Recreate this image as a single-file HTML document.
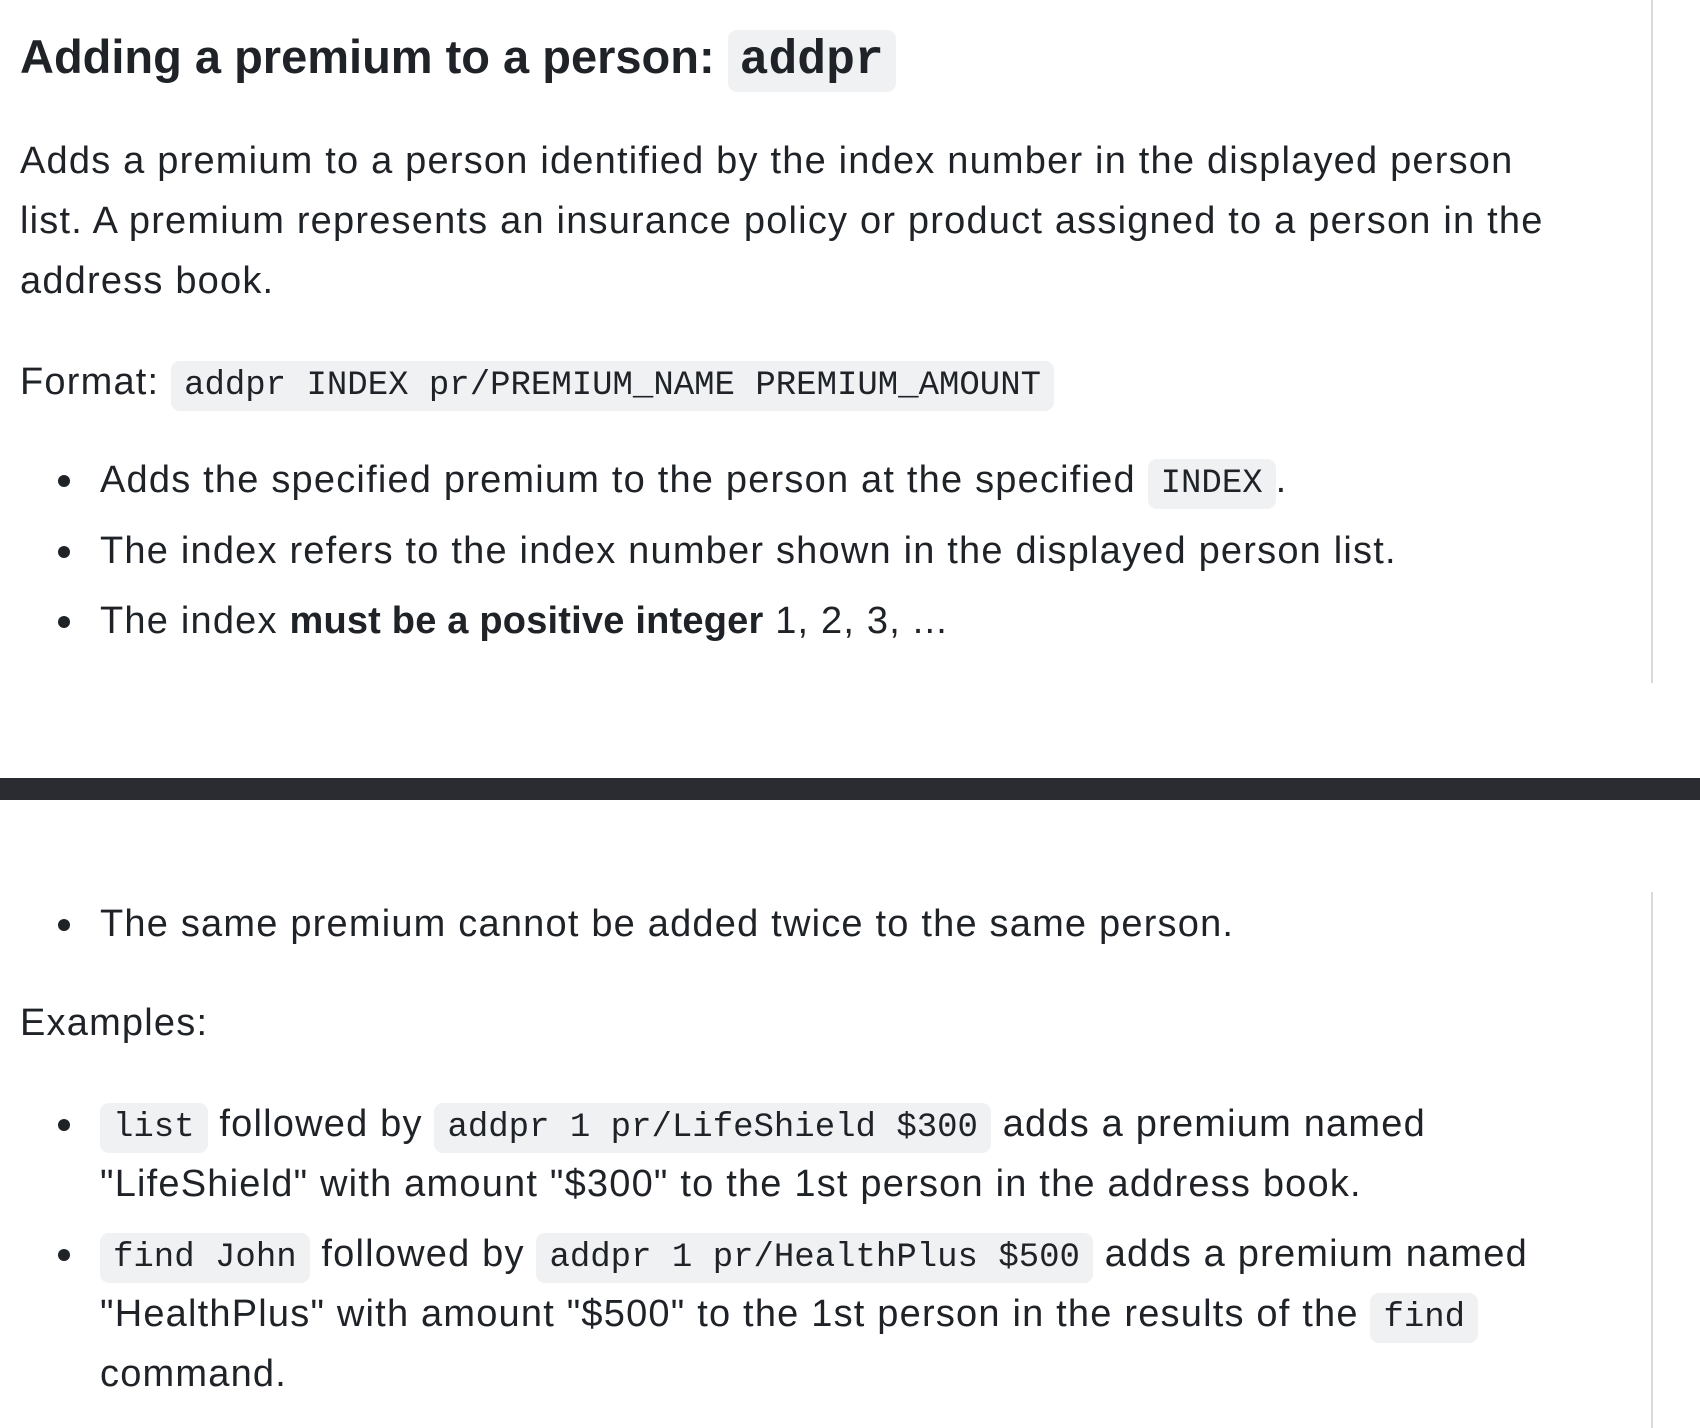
<!DOCTYPE html>
<html><head><meta charset="utf-8"><style>
html,body{margin:0;padding:0;background:#fff;width:1700px;height:1428px;overflow:hidden;position:relative}
body{font-family:"Liberation Sans",sans-serif;color:#1f2328;}
.l{position:absolute;left:20px;white-space:nowrap;font-size:38px;letter-spacing:1.2px;line-height:60px;height:60px}
.l b{letter-spacing:0.2px}
.b{left:100px}
.dot{position:absolute;left:58px;width:12px;height:12px;border-radius:50%;background:#1f2328}
code{font-family:"Liberation Mono",monospace;background:#eff1f3;border-radius:9px;padding:6px 13px;font-size:34px;letter-spacing:0}
h1{position:absolute;left:20px;top:22px;margin:0;font-size:47px;font-weight:bold;line-height:70px;white-space:nowrap}
h1 code{font-size:48px;padding:4px 12px}
.vr{position:absolute;left:1651px;width:2px;background:#d8dadd}
.band{position:absolute;left:0;top:778px;width:1700px;height:22px;background:#2b2c31}
</style></head><body>
<div class="vr" style="top:0;height:683px"></div>
<div class="vr" style="top:892px;height:536px"></div>
<h1>Adding a premium to a person: <code>addpr</code></h1>
<div class="l" style="top:131px">Adds a premium to a person identified by the index number in the displayed person</div>
<div class="l" style="top:191px">list. A premium represents an insurance policy or product assigned to a person in the</div>
<div class="l" style="top:251px">address book.</div>
<div class="l" style="top:352px">Format: <code>addpr INDEX pr/PREMIUM_NAME PREMIUM_AMOUNT</code></div>
<div class="dot" style="top:475px"></div>
<div class="l b" style="top:450px">Adds the specified premium to the person at the specified <code>INDEX</code>.</div>
<div class="dot" style="top:546px"></div>
<div class="l b" style="top:521px">The index refers to the index number shown in the displayed person list.</div>
<div class="dot" style="top:616px"></div>
<div class="l b" style="top:591px">The index <b>must be a positive integer</b> 1, 2, 3, ...</div>
<div class="band"></div>
<div class="dot" style="top:919px"></div>
<div class="l b" style="top:894px">The same premium cannot be added twice to the same person.</div>
<div class="l" style="top:993px">Examples:</div>
<div class="dot" style="top:1119px"></div>
<div class="l b" style="top:1094px"><code>list</code> followed by <code>addpr 1 pr/LifeShield $300</code> adds a premium named</div>
<div class="l b" style="top:1154px">"LifeShield" with amount "$300" to the 1st person in the address book.</div>
<div class="dot" style="top:1249px"></div>
<div class="l b" style="top:1224px"><code>find John</code> followed by <code>addpr 1 pr/HealthPlus $500</code> adds a premium named</div>
<div class="l b" style="top:1284px">"HealthPlus" with amount "$500" to the 1st person in the results of the <code>find</code></div>
<div class="l b" style="top:1344px">command.</div>
</body></html>
